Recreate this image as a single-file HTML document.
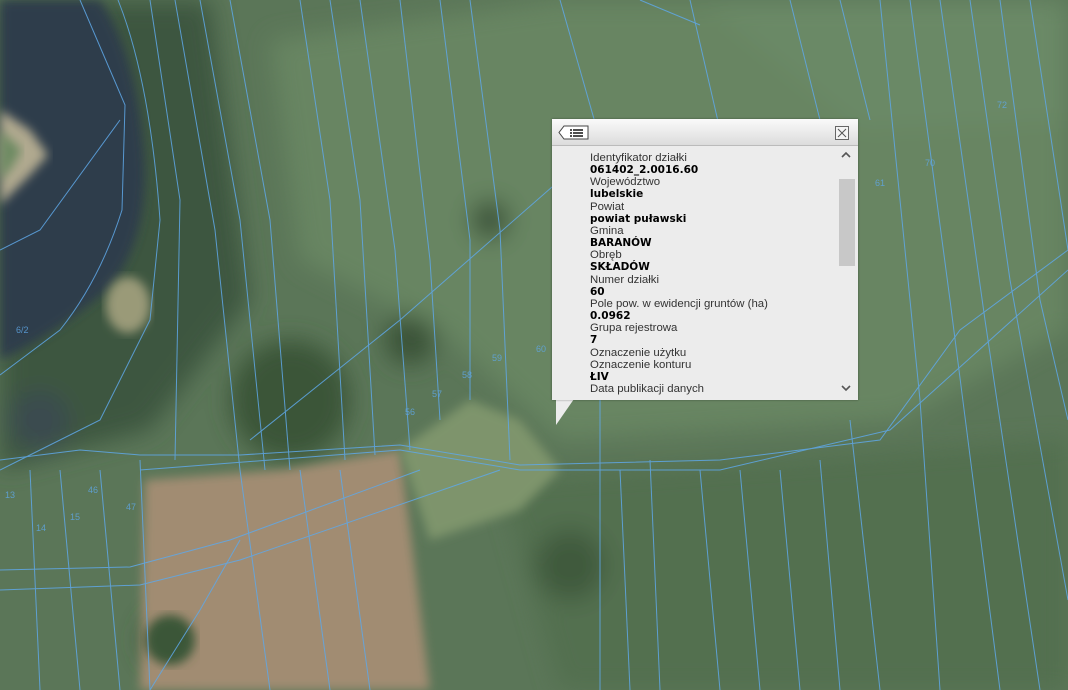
<!DOCTYPE html>
<html><head><meta charset="utf-8"><style>
html,body{margin:0;padding:0;width:1068px;height:690px;overflow:hidden;background:#5d7759;}
#map{position:absolute;left:0;top:0}
.pop{position:absolute;left:552px;top:119px;width:306px;height:281px;background:#ececec;box-shadow:0 0 2px rgba(0,0,0,.4);font-family:"Liberation Sans","DejaVu Sans",sans-serif;font-size:11.4px;}
.hdr{height:26px;background:linear-gradient(#fafafa,#dcdcdc);border-bottom:1px solid #bbb;position:relative}
.txt{position:absolute;left:38px;top:33px;line-height:12.15px;color:#333;height:244px;overflow:hidden;width:240px}
.txt b{color:#000;font-family:"DejaVu Sans",sans-serif;font-size:10.5px}
.sb{position:absolute;right:3px;top:60px;width:16px;height:87px;background:#c8c8c8}
.tail{position:absolute;left:556px;top:399px;width:0;height:0;border-left:0 solid transparent;border-right:18px solid transparent;border-top:26px solid #ececec}
</style></head><body>
<svg id="map" width="1068" height="690" viewBox="0 0 1068 690">
<defs>
<filter id="bl"><feGaussianBlur stdDeviation="12"/></filter>
<filter id="bl2"><feGaussianBlur stdDeviation="5"/></filter>
</defs>
<rect width="1068" height="690" fill="#5b7658"/>
<g filter="url(#bl)">
<path d="M270 40 L560 0 L700 0 L860 120 L1068 100 L1068 330 L900 420 L560 440 L440 330 L300 260Z" fill="#688562"/>
<path d="M700 0 L1068 0 L1068 120 L860 130Z" fill="#6b8966"/>
<path d="M0 0 L210 0 L250 300 L150 430 L0 470Z" fill="#3d5741"/>
<path d="M500 480 L1068 440 L1068 690 L560 690Z" fill="#537050"/>
<circle cx="290" cy="400" r="60" fill="#3a5437"/>
<circle cx="410" cy="340" r="25" fill="#3b5238"/>
<circle cx="490" cy="220" r="20" fill="#3d553b"/>
<circle cx="570" cy="565" r="35" fill="#3f5a3d"/>
<circle cx="170" cy="640" r="28" fill="#3c5538"/>
<circle cx="40" cy="420" r="30" fill="#3b4c50"/>
</g>
<path d="M0 0 L100 0 Q140 60 145 170 Q145 260 95 300 Q45 340 0 360Z" fill="#2f3e4b" filter="url(#bl2)"/>
<path d="M0 110 L30 130 L48 155 L30 175 L0 205Z" fill="#b0a98f" filter="url(#bl2)"/>
<path d="M0 130 L22 150 L10 170 L0 180Z" fill="#6d8a62" filter="url(#bl2)"/>
<ellipse cx="128" cy="305" rx="22" ry="28" fill="#9a9a78" filter="url(#bl2)"/>
<path d="M145 480 L285 470 L400 450 L430 690 L140 690Z" fill="#a18c72" filter="url(#bl2)"/>
<path d="M400 450 L470 400 L520 420 L560 470 L520 510 L430 540Z" fill="#7e946c" filter="url(#bl2)"/>
<circle cx="170" cy="640" r="25" fill="#3b5637" filter="url(#bl2)"/>
<g stroke="#5fa8e8" stroke-width="1" fill="none" opacity=".85">
<path d="M80 0 L125 105 L122 210 Q100 280 60 330 L0 375"/>
<path d="M118 0 Q150 80 160 220 L150 320 L100 420 L20 460 L0 470"/>
<path d="M0 250 L40 230 L120 120"/>
<path d="M150 0 L180 200 L175 460"/>
<path d="M175 0 L215 230 L240 470"/>
<path d="M200 0 L240 220 L265 470"/>
<path d="M230 0 L270 220 L290 470"/>
<path d="M300 0 L330 200 L345 460"/>
<path d="M330 0 L360 200 L375 455"/>
<path d="M360 0 L395 250 L410 450"/>
<path d="M400 0 L430 260 L440 420"/>
<path d="M440 0 L470 240 L470 400"/>
<path d="M470 0 L500 230 L510 460"/>
<path d="M600 400 L600 690"/>
<path d="M620 470 L630 690"/>
<path d="M650 460 L660 690"/>
<path d="M690 0 L720 130"/>
<path d="M700 470 L720 690"/>
<path d="M740 470 L760 690"/>
<path d="M780 470 L800 690"/>
<path d="M790 0 L820 120"/>
<path d="M820 460 L840 690"/>
<path d="M840 0 L870 120"/>
<path d="M850 420 L880 690"/>
<path d="M880 0 L920 400 L940 690"/>
<path d="M910 0 L950 300 L1000 690"/>
<path d="M940 0 L985 320 L1040 690"/>
<path d="M970 0 L1010 280 L1068 600"/>
<path d="M1000 0 L1040 300 L1068 420"/>
<path d="M1030 0 L1068 250"/>
<path d="M0 460 L80 450 L140 455 L240 455 L400 445 L520 465 L720 460 L880 440 L960 330 L1068 250"/>
<path d="M140 470 L400 450 L520 470 L720 470 L890 430 L1068 270"/>
<path d="M0 590 L140 585 L240 560 L500 470"/>
<path d="M0 570 L130 567 L230 540 L420 470"/>
<path d="M150 690 L200 610 L240 540"/>
<path d="M30 470 L40 690"/>
<path d="M60 470 L80 690"/>
<path d="M100 470 L120 690"/>
<path d="M140 460 L150 690"/>
<path d="M240 470 L270 690"/>
<path d="M300 470 L330 690"/>
<path d="M340 470 L370 690"/>
<path d="M560 0 L600 140"/>
<path d="M640 0 L700 25"/>
<path d="M250 440 L400 320 L560 180"/>
</g>
<g fill="#5fa8e8" font-family="Liberation Sans,sans-serif" font-size="9" opacity=".8">
<text x="16" y="333">6/2</text><text x="492" y="361">59</text><text x="536" y="352">60</text>
<text x="462" y="378">58</text><text x="432" y="397">57</text><text x="405" y="415">56</text>
<text x="875" y="186">61</text><text x="925" y="166">70</text><text x="997" y="108">72</text>
<text x="70" y="520">15</text><text x="36" y="531">14</text><text x="5" y="498">13</text>
<text x="88" y="493">46</text><text x="126" y="510">47</text>
</g>
</svg>
<div class="tail"></div>
<div class="pop">
<div class="hdr">
<svg width="32" height="16" style="position:absolute;left:6px;top:6px" viewBox="0 0 32 16"><path d="M6 1 L30 1 L30 14 L6 14 L1 7.5Z" fill="#fff" stroke="#444"/><g stroke="#222" stroke-width="1.6"><line x1="12" y1="5" x2="14" y2="5"/><line x1="15" y1="5" x2="25" y2="5"/><line x1="12" y1="8" x2="14" y2="8"/><line x1="15" y1="8" x2="25" y2="8"/><line x1="12" y1="11" x2="14" y2="11"/><line x1="15" y1="11" x2="25" y2="11"/></g></svg>
<svg width="14" height="14" style="position:absolute;left:283px;top:7px" viewBox="0 0 14 14"><rect x=".5" y=".5" width="13" height="13" fill="#f4f4f4" stroke="#666"/><path d="M3 3L11 11M11 3L3 11" stroke="#555"/></svg>
</div>
<svg width="10" height="8" style="position:absolute;left:289px;top:32px"><path d="M1 6L5 2L9 6" stroke="#555" stroke-width="1.6" fill="none"/></svg>
<div class="sb"></div>
<svg width="10" height="8" style="position:absolute;left:289px;top:265px"><path d="M1 2L5 6L9 2" stroke="#555" stroke-width="1.6" fill="none"/></svg>
<div class="txt">Identyfikator działki<br><b>061402_2.0016.60</b><br>Województwo<br><b>lubelskie</b><br>Powiat<br><b>powiat puławski</b><br>Gmina<br><b>BARANÓW</b><br>Obręb<br><b>SKŁADÓW</b><br>Numer działki<br><b>60</b><br>Pole pow. w ewidencji gruntów (ha)<br><b>0.0962</b><br>Grupa rejestrowa<br><b>7</b><br>Oznaczenie użytku<br>Oznaczenie konturu<br><b>ŁIV</b><br>Data publikacji danych<br><b>2020-02-19</b></div>
</div>
</body></html>
